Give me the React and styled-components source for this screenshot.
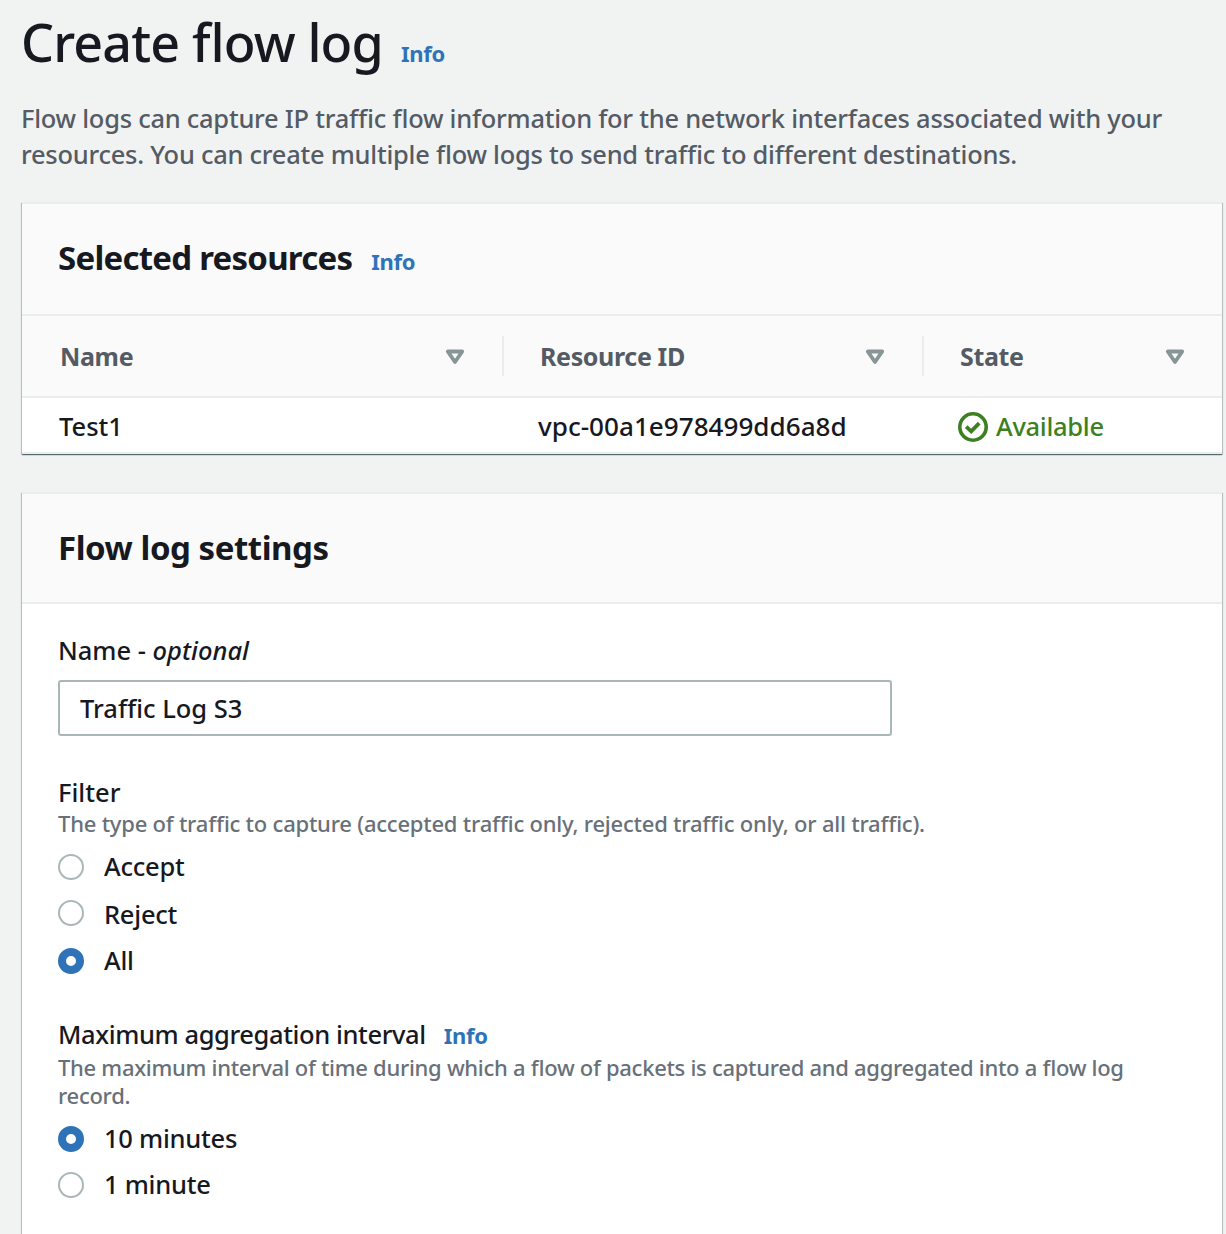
import React from 'react';
import styled, { createGlobalStyle } from 'styled-components';

const GlobalStyle = createGlobalStyle`
  * { box-sizing: border-box; }
  body {
    margin: 0;
    background: #f1f3f3;
    color: #16191f;
    font-family: "Noto Sans", "Open Sans", sans-serif;
    font-size: 25.5px;
    font-weight: 500;
    font-feature-settings: "liga" 1;
  }
  h1, h2, p { margin: 0; }
`;

const Page = styled.main`
  width: 1226px;
  height: 1234px;
  padding-top: 12px;
  overflow: hidden;
  display: flex;
  flex-direction: column;
`;

const PageHeader = styled.header`
  padding-left: 21px;
`;

const TitleRow = styled.div`
  display: flex;
  align-items: baseline;
  gap: ${(p) => p.$gap}px;
`;

const PageTitle = styled.h1`
  font-size: 52px;
  line-height: 60px;
  font-weight: 500;
  letter-spacing: -0.85px;
  white-space: nowrap;
`;

const InfoLink = styled.a`
  color: #2e73b8;
  font-size: 22px;
  line-height: 28px;
  font-weight: 700;
  letter-spacing: -0.3px;
`;

const Lead = styled.p`
  margin-top: 28px;
  color: #545b64;
  font-size: 25.45px;
  line-height: 36px;
  letter-spacing: -0.245px;
  white-space: nowrap;
`;

const Card = styled.section`
  flex: ${(p) => (p.$grow ? '1 0 auto' : 'none')};
  width: 1200px;
  margin: ${(p) => p.$top}px 0 0 22px;
  border-top: 2px solid #eaeded;
  background: #fff;
  box-shadow: 0 1px 1px 0 rgba(0, 28, 36, 0.45), 1px 1px 1px 0 rgba(0, 28, 36, 0.18),
    -1px 1px 1px 0 rgba(0, 28, 36, 0.18);
`;

const CardHeader = styled.div`
  height: ${(p) => p.$height}px;
  padding: 34px 36px 0;
  background: #fafafa;
  border-bottom: 2px solid #eaeded;
`;

const CardTitle = styled.h2`
  font-size: 33px;
  line-height: 40px;
  font-weight: 700;
  letter-spacing: ${(p) => p.$tracking}px;
  white-space: nowrap;
`;

const TableRow = styled.div`
  display: grid;
  grid-template-columns: 482px 420px 298px;
  align-items: center;
  border-bottom: 2px solid #eaeded;
`;

const HeadRow = styled(TableRow)`
  height: 82px;
  background: #fafafa;
`;

const BodyRow = styled(TableRow)`
  height: 56px;
  padding-top: 2px;
`;

const HeadCell = styled.div`
  display: flex;
  align-items: center;
  justify-content: space-between;
  height: 40px;
  padding: 0 37px 0 ${(p) => (p.$first ? 38 : 36)}px;
  border-right: ${(p) => (p.$last ? '0' : '2px solid #eaeded')};
  color: #545b64;
  font-size: 25px;
  font-weight: 700;
  letter-spacing: -0.35px;
`;

const BodyCell = styled.div`
  display: flex;
  align-items: center;
  gap: 8px;
  padding-left: ${(p) => (p.$first ? 37 : 34)}px;
  color: ${(p) => (p.$success ? '#3d8022' : '#16191f')};
  font-size: ${(p) => p.$size || 25.5}px;
  letter-spacing: ${(p) => (p.$success ? -0.3 : 0)}px;
  line-height: 36px;
`;

const SettingsBody = styled.div`
  padding: 29px 36px 0;
`;

const Field = styled.div`
  margin-top: ${(p) => p.$top || 0}px;
`;

const Label = styled.div`
  line-height: 34px;
  letter-spacing: ${(p) => p.$tracking || 0}px;
  white-space: nowrap;
`;

const Hint = styled.p`
  margin-top: ${(p) => p.$top}px;
  color: #687078;
  font-size: 22px;
  line-height: 28px;
  letter-spacing: ${(p) => p.$tracking}px;
  white-space: nowrap;
`;

const TextInput = styled.input`
  display: block;
  width: 834px;
  height: 56px;
  margin-top: 13px;
  padding: 0 20px;
  border: 2px solid #aab7b8;
  border-radius: 3px;
  background: #fff;
  color: #16191f;
  font: inherit;
  outline: none;
`;

const RadioList = styled.div`
  padding-top: ${(p) => p.$top}px;
`;

const RadioRow = styled.label`
  display: flex;
  align-items: center;
  gap: 20px;
  height: 46px;
  margin-top: ${(p) => p.$top || 0}px;
`;

const RadioDot = styled.span`
  width: 26px;
  height: 26px;
  border-radius: 50%;
  background: #fff;
  border: ${(p) => (p.$checked ? '8px solid #2e73b8' : '2px solid #aab7b8')};
`;

const RadioText = styled.span`
  line-height: 36px;
  padding: ${(p) => p.$drop || 0}px 0 2px;
  letter-spacing: -0.25px;
`;

const SortSvg = styled.svg`
  flex: none;
  margin-top: 2px;
`;

const SortIcon = () => (
  <SortSvg width="20" height="16" viewBox="0 0 20 16" fill="none">
    <path d="M2.8 2.5H17.2L10 13Z" stroke="#879596" strokeWidth="3.8" strokeLinejoin="round" />
  </SortSvg>
);

const CheckSvg = styled.svg`
  flex: none;
  margin-top: 2px;
`;

const CheckCircle = () => (
  <CheckSvg width="30" height="30" viewBox="0 0 30 30" fill="none" stroke="#3d8022">
    <circle cx="15" cy="15" r="13.2" strokeWidth="3.6" />
    <path d="M8.2 14.6L13.2 19.4L21.2 11.2" strokeWidth="3.8" />
  </CheckSvg>
);

const Radio = ({ checked, top, drop, children }) => (
  <RadioRow $top={top}>
    <RadioDot $checked={checked} />
    <RadioText $drop={drop}>{children}</RadioText>
  </RadioRow>
);

export default function App() {
  return (
    <Page>
      <GlobalStyle />
      <PageHeader>
        <TitleRow $gap={18}>
          <PageTitle>Create flow log</PageTitle>
          <InfoLink>Info</InfoLink>
        </TitleRow>
        <Lead>
          Flow logs can capture IP traffic flow information for the network interfaces associated with your
          <br />
          resources. You can create multiple flow logs to send traffic to different destinations.
        </Lead>
      </PageHeader>

      <Card $top={30}>
        <CardHeader $height={112}>
          <TitleRow $gap={19}>
            <CardTitle $tracking={-0.75}>Selected resources</CardTitle>
            <InfoLink>Info</InfoLink>
          </TitleRow>
        </CardHeader>
        <HeadRow>
          <HeadCell $first>Name<SortIcon /></HeadCell>
          <HeadCell>Resource ID<SortIcon /></HeadCell>
          <HeadCell $last>State<SortIcon /></HeadCell>
        </HeadRow>
        <BodyRow>
          <BodyCell $first>Test1</BodyCell>
          <BodyCell $size={26.1}>vpc-00a1e978499dd6a8d</BodyCell>
          <BodyCell $success><CheckCircle />Available</BodyCell>
        </BodyRow>
      </Card>

      <Card $top={38} $grow>
        <CardHeader $height={110}>
          <CardTitle $tracking={-0.45}>Flow log settings</CardTitle>
        </CardHeader>
        <SettingsBody>
          <Field>
            <Label>Name - <em>optional</em></Label>
            <TextInput defaultValue="Traffic Log S3" />
          </Field>
          <Field $top={39}>
            <Label>Filter</Label>
            <Hint $top={0} $tracking={-0.22}>
              The type of traffic to capture (accepted traffic only, rejected traffic only, or all traffic).
            </Hint>
            <RadioList $top={7}>
              <Radio>Accept</Radio>
              <Radio drop={3}>Reject</Radio>
              <Radio top={2} checked>All</Radio>
            </RadioList>
          </Field>
          <Field $top={33}>
            <TitleRow $gap={18}>
              <Label $tracking={-0.4}>Maximum aggregation interval</Label>
              <InfoLink>Info</InfoLink>
            </TitleRow>
            <Hint $top={2} $tracking={-0.29}>
              The maximum interval of time during which a flow of packets is captured and aggregated into a flow log
              <br />
              record.
            </Hint>
            <RadioList $top={7}>
              <Radio checked>10 minutes</Radio>
              <Radio>1 minute</Radio>
            </RadioList>
          </Field>
        </SettingsBody>
      </Card>
    </Page>
  );
}
